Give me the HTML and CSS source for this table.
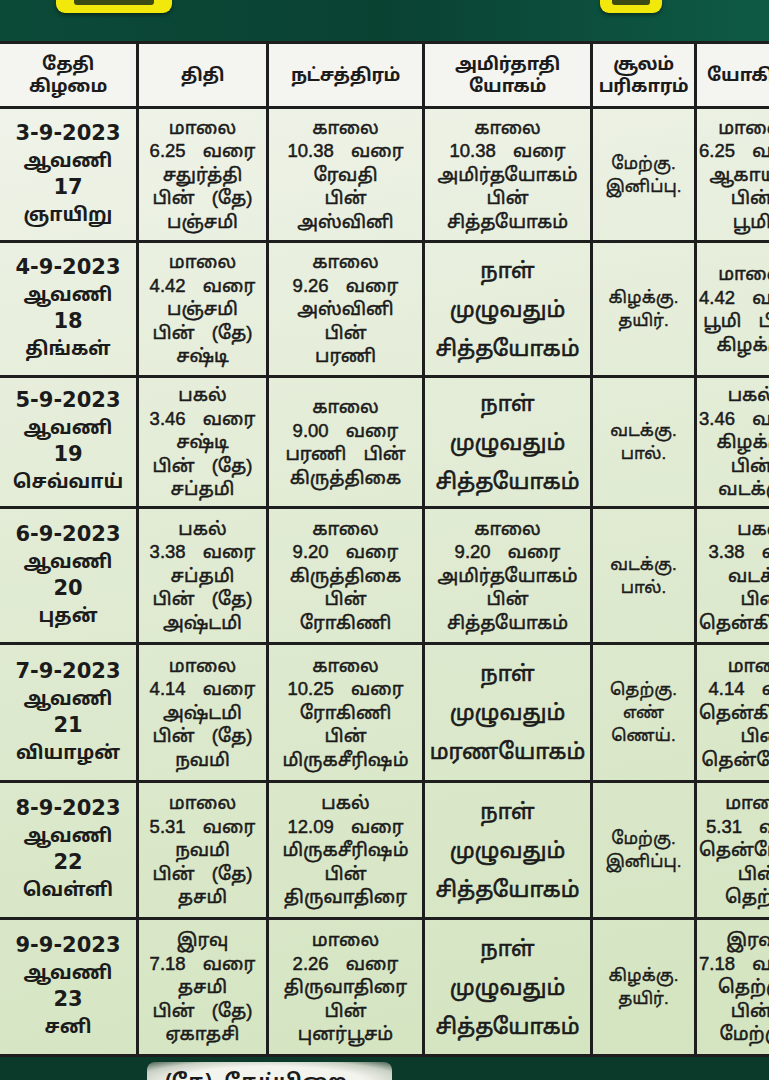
FILE: index.html
```html
<!DOCTYPE html>
<html lang="ta">
<head>
<meta charset="utf-8">
<title>பஞ்சாங்கம்</title>
<link rel="stylesheet" href="styles.css">
</head>
<body>
<div class="page">
  <div class="banner">
    <div class="tab tab-a"><div class="tab-in"></div></div>
    <div class="tab tab-b"><div class="tab-in"></div></div>
  </div>

  <div class="table">
    <div class="cell head">தேதி<br>கிழமை</div>
    <div class="cell head">திதி</div>
    <div class="cell head">நட்சத்திரம்</div>
    <div class="cell head">அமிர்தாதி<br>யோகம்</div>
    <div class="cell head">சூலம்<br>பரிகாரம்</div>
    <div class="cell head last">யோகினி</div>

    <!-- row 1 -->
    <div class="cell date"><b class="d">3-9-2023</b><span>ஆவணி</span><b class="n">17</b><span>ஞாயிறு</span></div>
    <div class="cell txt">மாலை<br>6.25 வரை<br>சதுர்த்தி<br>பின் (தே)<br>பஞ்சமி</div>
    <div class="cell txt">காலை<br>10.38 வரை<br>ரேவதி<br>பின்<br>அஸ்வினி</div>
    <div class="cell txt yog">காலை<br>10.38 வரை<br>அமிர்தயோகம்<br>பின்<br>சித்தயோகம்</div>
    <div class="cell sul">மேற்கு.<br>இனிப்பு.</div>
    <div class="cell txt last">மாலை<br>6.25 வரை<br>ஆகாயம்<br>பின்<br>பூமி</div>

    <!-- row 2 -->
    <div class="cell date"><b class="d">4-9-2023</b><span>ஆவணி</span><b class="n">18</b><span>திங்கள்</span></div>
    <div class="cell txt">மாலை<br>4.42 வரை<br>பஞ்சமி<br>பின் (தே)<br>சஷ்டி</div>
    <div class="cell txt">காலை<br>9.26 வரை<br>அஸ்வினி<br>பின்<br>பரணி</div>
    <div class="cell full">நாள்<br>முழுவதும்<br>சித்தயோகம்</div>
    <div class="cell sul">கிழக்கு.<br>தயிர்.</div>
    <div class="cell txt last">மாலை<br>4.42 வரை<br>பூமி பின்<br>கிழக்கு</div>

    <!-- row 3 -->
    <div class="cell date"><b class="d">5-9-2023</b><span>ஆவணி</span><b class="n">19</b><span>செவ்வாய்</span></div>
    <div class="cell txt">பகல்<br>3.46 வரை<br>சஷ்டி<br>பின் (தே)<br>சப்தமி</div>
    <div class="cell txt">காலை<br>9.00 வரை<br>பரணி பின்<br>கிருத்திகை</div>
    <div class="cell full">நாள்<br>முழுவதும்<br>சித்தயோகம்</div>
    <div class="cell sul">வடக்கு.<br>பால்.</div>
    <div class="cell txt last">பகல்<br>3.46 வரை<br>கிழக்கு<br>பின்<br>வடக்கு</div>

    <!-- row 4 -->
    <div class="cell date"><b class="d">6-9-2023</b><span>ஆவணி</span><b class="n">20</b><span>புதன்</span></div>
    <div class="cell txt">பகல்<br>3.38 வரை<br>சப்தமி<br>பின் (தே)<br>அஷ்டமி</div>
    <div class="cell txt">காலை<br>9.20 வரை<br>கிருத்திகை<br>பின்<br>ரோகிணி</div>
    <div class="cell txt yog">காலை<br>9.20 வரை<br>அமிர்தயோகம்<br>பின்<br>சித்தயோகம்</div>
    <div class="cell sul">வடக்கு.<br>பால்.</div>
    <div class="cell txt last">பகல்<br>3.38 வரை<br>வடக்கு<br>பின்<br>தென்கிழக்கு</div>

    <!-- row 5 -->
    <div class="cell date"><b class="d">7-9-2023</b><span>ஆவணி</span><b class="n">21</b><span>வியாழன்</span></div>
    <div class="cell txt">மாலை<br>4.14 வரை<br>அஷ்டமி<br>பின் (தே)<br>நவமி</div>
    <div class="cell txt">காலை<br>10.25 வரை<br>ரோகிணி<br>பின்<br>மிருகசீரிஷம்</div>
    <div class="cell full">நாள்<br>முழுவதும்<br>மரணயோகம்</div>
    <div class="cell sul">தெற்கு.<br>எண்<br>ணெய்.</div>
    <div class="cell txt last">மாலை<br>4.14 வரை<br>தென்கிழக்கு<br>பின்<br>தென்மேற்கு</div>

    <!-- row 6 -->
    <div class="cell date"><b class="d">8-9-2023</b><span>ஆவணி</span><b class="n">22</b><span>வெள்ளி</span></div>
    <div class="cell txt">மாலை<br>5.31 வரை<br>நவமி<br>பின் (தே)<br>தசமி</div>
    <div class="cell txt">பகல்<br>12.09 வரை<br>மிருகசீரிஷம்<br>பின்<br>திருவாதிரை</div>
    <div class="cell full">நாள்<br>முழுவதும்<br>சித்தயோகம்</div>
    <div class="cell sul">மேற்கு.<br>இனிப்பு.</div>
    <div class="cell txt last">மாலை<br>5.31 வரை<br>தென்மேற்கு<br>பின்<br>தெற்கு</div>

    <!-- row 7 -->
    <div class="cell date"><b class="d">9-9-2023</b><span>ஆவணி</span><b class="n">23</b><span>சனி</span></div>
    <div class="cell txt">இரவு<br>7.18 வரை<br>தசமி<br>பின் (தே)<br>ஏகாதசி</div>
    <div class="cell txt">மாலை<br>2.26 வரை<br>திருவாதிரை<br>பின்<br>புனர்பூசம்</div>
    <div class="cell full">நாள்<br>முழுவதும்<br>சித்தயோகம்</div>
    <div class="cell sul">கிழக்கு.<br>தயிர்.</div>
    <div class="cell txt last">இரவு<br>7.18 வரை<br>தெற்கு<br>பின்<br>மேற்கு</div>
  </div>

  <div class="footer">
    <div class="note">(தே)- தேய்பிறை</div>
  </div>
</div>
</body>
</html>
```

FILE: styles.css
```css
html, body {
  margin: 0;
  padding: 0;
}
body {
  width: 769px;
  height: 1080px;
  overflow: hidden;
  background: #0b4030;
  font-family: "Liberation Sans", "Noto Sans Tamil", "Lohit Tamil", "Noto Sans", "DejaVu Sans", sans-serif;
  color: #1b1b1b;
}
.page {
  width: 769px;
  height: 1080px;
  overflow: hidden;
  display: flex;
  flex-direction: column;
  background: linear-gradient(90deg, #0c4a38 0%, #0a4232 50%, #0e5a45 100%);
}
.banner {
  height: 41px;
  flex: none;
  display: flex;
  align-items: flex-start;
}
.tab {
  height: 13px;
  background: #f3e80c;
  border-radius: 0 0 9px 9px;
  box-shadow: 0 2px 4px rgba(0,0,0,0.45);
  display: flex;
  justify-content: center;
}
.tab-in {
  height: 5px;
  background: #3c4a14;
  border-radius: 0 0 3px 3px;
}
.tab-a { margin-left: 56px; width: 116px; }
.tab-a .tab-in { width: 80px; }
.tab-b { margin-left: 428px; width: 62px; }
.tab-b .tab-in { width: 38px; }

.table {
  flex: none;
  width: 880px;
  display: grid;
  grid-template-columns: 139px 130px 156px 168px 104px 183px;
  grid-template-rows: 65px 134px 135px 131px 136px 138px 137px 137px;
  border-top: 3px solid #1e1e1e;
  background: linear-gradient(170deg, #f1f4ec 0%, #e6eedb 30%, #dbe8cb 65%, #d3e4bf 100%);
}
.cell {
  box-sizing: border-box;
  border-right: 3px solid #1e1e1e;
  border-bottom: 3px solid #1e1e1e;
  display: flex;
  flex-direction: column;
  align-items: center;
  justify-content: center;
  text-align: center;
  overflow: hidden;
  font-weight: bold;
}
.cell.last {
  border-right: none;
  align-items: flex-start;
  padding-left: 2px;
}
.head {
  background: #f4f4f1;
  font-size: 18px;
  line-height: 22px;
  letter-spacing: -0.3px;
}
.head.last { padding-left: 10px; }
.date {
  font-size: 19px;
  line-height: 27px;
  padding-bottom: 2px;
}
.date b, .date span { display: block; }
.date .d {
  font-family: "DejaVu Sans", sans-serif;
  font-size: 21px;
}
.date .n {
  font-family: "DejaVu Sans", sans-serif;
  font-size: 21px;
}
.txt {
  font-size: 18.5px;
  line-height: 23.5px;
  word-spacing: 12px;
  font-weight: normal;
  -webkit-text-stroke: 0.5px #1b1b1b;
}
.txt.last { text-align: center; }
.full {
  font-size: 22px;
  line-height: 39px;
  font-weight: normal;
  -webkit-text-stroke: 0.6px #1b1b1b;
}
.sul {
  font-size: 17px;
  line-height: 23px;
  font-weight: normal;
  -webkit-text-stroke: 0.4px #1b1b1b;
}

.footer {
  flex: 1;
  background: #0b3a2b;
  padding-left: 147px;
  padding-top: 5px;
}
.note {
  width: 245px;
  height: 40px;
  background: radial-gradient(ellipse at center, #f4f4ee 55%, #c9d0c4 78%, #46604f 100%);
  border-radius: 8px;
  font-size: 20px;
  font-weight: bold;
  padding-top: 8px;
  padding-left: 18px;
  box-sizing: border-box;
  white-space: nowrap;
  color: #1b1b1b;
}
```
